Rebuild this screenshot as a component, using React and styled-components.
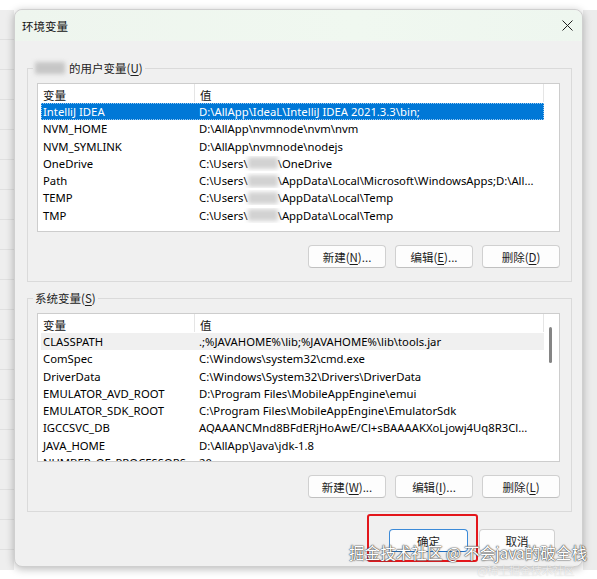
import React from 'react';
import styled, { createGlobalStyle } from 'styled-components';

const GlobalStyle = createGlobalStyle`
  html, body {
    margin: 0;
    padding: 0;
    background: #ffffff;
  }
  body {
    font-family: "Noto Sans", "Noto Sans CJK SC", sans-serif;
    font-size: 11.3px;
    color: #000;
  }
`;

const userVars = [
  { name: 'IntelliJ IDEA', value: ['D:\\AllApp\\IdeaL\\IntelliJ IDEA 2021.3.3\\bin;'] },
  { name: 'NVM_HOME', value: ['D:\\AllApp\\nvmnode\\nvm\\nvm'] },
  { name: 'NVM_SYMLINK', value: ['D:\\AllApp\\nvmnode\\nodejs'] },
  { name: 'OneDrive', value: ['C:\\Users\\', null, '\\OneDrive'] },
  { name: 'Path', value: ['C:\\Users\\', null, '\\AppData\\Local\\Microsoft\\WindowsApps;D:\\All...'] },
  { name: 'TEMP', value: ['C:\\Users\\', null, '\\AppData\\Local\\Temp'] },
  { name: 'TMP', value: ['C:\\Users\\', null, '\\AppData\\Local\\Temp'] },
];

const systemVars = [
  { name: 'CLASSPATH', value: ['.;%JAVAHOME%\\lib;%JAVAHOME%\\lib\\tools.jar'] },
  { name: 'ComSpec', value: ['C:\\Windows\\system32\\cmd.exe'] },
  { name: 'DriverData', value: ['C:\\Windows\\System32\\Drivers\\DriverData'] },
  { name: 'EMULATOR_AVD_ROOT', value: ['D:\\Program Files\\MobileAppEngine\\emui'] },
  { name: 'EMULATOR_SDK_ROOT', value: ['C:\\Program Files\\MobileAppEngine\\EmulatorSdk'] },
  { name: 'IGCCSVC_DB', value: ['AQAAANCMnd8BFdERjHoAwE/Cl+sBAAAAKXoLjowj4Uq8R3Cl...'] },
  { name: 'JAVA_HOME', value: ['D:\\AllApp\\Java\\jdk-1.8'] },
  { name: 'NUMBER_OF_PROCESSORS', value: ['20'] },
];

export default function App() {
  return (
    <>
      <GlobalStyle />
      <Page>
        <SideStrip />
        <Dialog>
          <TitleBar>
            <Title>环境变量</Title>
            <CloseButton>
              <svg width="11" height="11" viewBox="0 0 11 11">
                <path d="M0.5 0.5L10.5 10.5M10.5 0.5L0.5 10.5" stroke="#1f1f1f" strokeWidth="1" />
              </svg>
            </CloseButton>
          </TitleBar>

          <Body>
            <Group>
              <Legend>
                <Blur $w={30} />
                的用户变量(<u>U</u>)
              </Legend>
              <VarList rows={userVars} selected={0} focused />
              <ButtonRow>
                <Button>新建(<u>N</u>)...</Button>
                <Button>编辑(<u>E</u>)...</Button>
                <Button>删除(<u>D</u>)</Button>
              </ButtonRow>
            </Group>

            <Group>
              <Legend>系统变量(<u>S</u>)</Legend>
              <VarList rows={systemVars} selected={0} scroll />
              <ButtonRow>
                <Button>新建(<u>W</u>)...</Button>
                <Button>编辑(<u>I</u>)...</Button>
                <Button>删除(<u>L</u>)</Button>
              </ButtonRow>
            </Group>
          </Body>

          <Footer>
            <Button $primary $w={79}>确定</Button>
            <Button $w={76}>取消</Button>
          </Footer>

          <Highlight />
        </Dialog>
        <SideStrip $right />
        <Watermark>
          掘金技术社区 @ 不会java的破全栈
          <small>@稀土掘金技术社区</small>
        </Watermark>
      </Page>
    </>
  );
}

function VarList({ rows, selected, focused, scroll }) {
  return (
    <ListBox>
      <ListMain>
        <Header>
          <HeaderCell $w={157}>变量</HeaderCell>
          <HeaderCell>值</HeaderCell>
        </Header>
        {rows.map((row, i) => (
          <Row key={row.name} $selected={i === selected} $focused={focused}>
            <NameCell>{row.name}</NameCell>
            <ValueCell>
              {row.value.map((part, j) =>
                part === null ? <Blur key={j} $w={30} /> : <span key={j}>{part}</span>
              )}
            </ValueCell>
          </Row>
        ))}
      </ListMain>
      <ScrollTrack>{scroll && <Thumb />}</ScrollTrack>
    </ListBox>
  );
}

const Page = styled.div`
  position: relative;
  width: 597px;
  height: 579px;
  display: flex;
  align-items: flex-start;
  padding-top: 9px;
  box-sizing: border-box;
  overflow: hidden;
`;

const SideStrip = styled.div`
  flex: 1;
  height: 560px;
  margin-top: 1px;
  background: repeating-linear-gradient(
    to bottom,
    #eeeeee 0px,
    #eeeeee 29px,
    #e0e0e0 29px,
    #e0e0e0 30px
  );
  ${(p) => p.$right && 'background: #ececec;'}
`;

const Dialog = styled.div`
  position: relative;
  width: 569px;
  height: 558px;
  flex: none;
  background: #f0f0f0;
  border: 1px solid #cfcfcf;
  border-radius: 8px;
  box-shadow: 0 2px 8px rgba(0, 0, 0, 0.28);
  box-sizing: border-box;
  display: flex;
  flex-direction: column;
`;

const TitleBar = styled.div`
  height: 31px;
  display: flex;
  align-items: center;
  justify-content: space-between;
  padding: 0 8px 0 7px;
  border-radius: 8px 8px 0 0;
  background: linear-gradient(to right, #eef5ee, #f0f8f0 60%, #eef6ef);
`;

const Title = styled.span`
  font-family: "Noto Sans CJK SC", sans-serif;
  font-size: 11.5px;
  color: #111;
`;

const CloseButton = styled.div`
  width: 14px;
  height: 14px;
  display: flex;
  align-items: center;
  justify-content: center;
`;

const Body = styled.div`
  display: flex;
  flex-direction: column;
  gap: 8px;
  padding: 19px 10px 0 12px;
`;

const Group = styled.fieldset`
  margin: 0;
  padding: 7px 11px 13px 9px;
  border: 1px solid #dadada;
  min-width: 0;
`;

const Legend = styled.legend`
  margin-left: -4px;
  padding: 0 2px;
  font-family: "Noto Sans CJK SC", sans-serif;
  font-size: 11.5px;
  line-height: 16px;
  color: #222;
  display: flex;
  align-items: center;

  u {
    text-underline-offset: 2px;
  }
`;

const Blur = styled.span`
  display: inline-block;
  width: ${(p) => p.$w}px;
  height: 12px;
  margin: 0 4px 0 0;
  vertical-align: middle;
  background: #c6c6c6;
  filter: blur(2px);
`;

const ListBox = styled.div`
  display: flex;
  height: 147px;
  background: #fff;
  border: 1px solid #cdcdcd;
  overflow: hidden;
`;

const ListMain = styled.div`
  flex: 1;
  min-width: 0;
  padding-left: 3px;
`;

const Header = styled.div`
  display: flex;
  height: 18px;
  margin-left: -3px;
  margin-bottom: 1px;
  border-right: 1px solid #e5e5e5;
`;

const HeaderCell = styled.div`
  ${(p) => (p.$w ? `width: ${p.$w}px; flex: none;` : 'flex: 1;')}
  display: flex;
  align-items: center;
  padding: 4px 0 0 5px;
  box-sizing: border-box;
  font-family: "Noto Sans CJK SC", sans-serif;
  font-size: 11.5px;
  color: #111;
  border-right: 1px solid #e5e5e5;
  &:last-child {
    border-right: none;
  }
`;

const Row = styled.div`
  display: flex;
  align-items: center;
  height: 17.25px;
  white-space: nowrap;
  box-sizing: border-box;
  background: ${(p) => (p.$selected ? (p.$focused ? '#0078d7' : '#f0f0f0') : 'transparent')};
  color: ${(p) => (p.$selected && p.$focused ? '#fff' : '#000')};
  outline: ${(p) => (p.$selected && p.$focused ? '1px dotted #9cc9f0' : 'none')};
  outline-offset: -1px;
`;

const NameCell = styled.div`
  width: 153px;
  flex: none;
  padding-left: 2px;
  box-sizing: border-box;
  overflow: hidden;
`;

const ValueCell = styled.div`
  flex: 1;
  padding-left: 5px;
  overflow: hidden;
  display: flex;
  align-items: center;

  ${Blur} {
    width: 30px;
    background: #d2d2d2;
    margin: 0;
  }
`;

const ScrollTrack = styled.div`
  width: 15px;
  flex: none;
  position: relative;
`;

const Thumb = styled.div`
  width: 3px;
  height: 36px;
  margin: 13px 0 0 5px;
  border-radius: 2px;
  background: #858585;
`;

const ButtonRow = styled.div`
  display: flex;
  justify-content: flex-end;
  gap: 9px;
  margin-top: 13px;
`;

const Button = styled.div`
  width: ${(p) => p.$w || 78}px;
  height: 23px;
  display: flex;
  align-items: center;
  justify-content: center;
  box-sizing: border-box;
  background: #fdfdfd;
  border: 1px solid ${(p) => (p.$primary ? '#3b8ad8' : '#d0d0d0')};
  border-bottom-color: ${(p) => (p.$primary ? '#1f6fc2' : '#c0c0c0')};
  border-radius: 4px;
  font-family: "Noto Sans CJK SC", sans-serif;
  font-size: 11.5px;
  color: #1b1b1b;

  u {
    text-underline-offset: 2px;
  }
`;

const Footer = styled.div`
  display: flex;
  justify-content: flex-end;
  gap: 11px;
  padding: 17px 27px 0 0;
`;

/* red annotation box drawn over the OK button */
const Highlight = styled.div`
  position: absolute;
  left: 352px;
  top: 504px;
  width: 111px;
  height: 48px;
  border: 2.5px solid #e3161b;
  border-radius: 3px;
  box-sizing: border-box;
  pointer-events: none;
`;

const Watermark = styled.div`
  position: absolute;
  left: 349px;
  top: 543px;
  font-family: "Noto Sans CJK SC", sans-serif;
  font-size: 15.7px;
  line-height: 20px;
  color: #ffffff;
  white-space: nowrap;
  text-shadow: 0 0 1px #444, 0 0 1px #444, 0 0 2px #666;
  letter-spacing: -0.1px;

  small {
    position: absolute;
    left: 128px;
    top: 17px;
    font-size: 11px;
    color: rgba(255, 255, 255, 0.7);
    text-shadow: 0 0 1px rgba(0, 0, 0, 0.2);
  }
`;
